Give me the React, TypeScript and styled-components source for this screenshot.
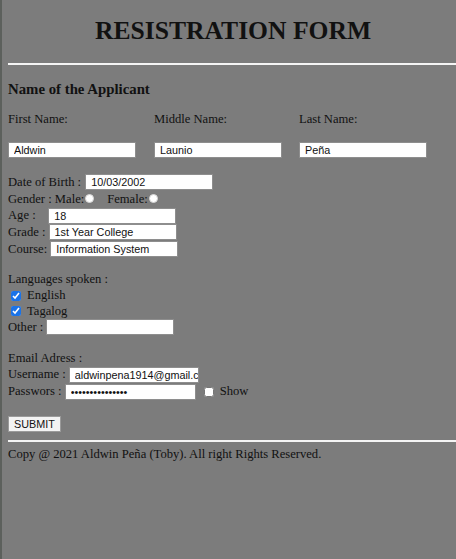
import React from 'react'
import styled, { createGlobalStyle } from 'styled-components'

const GlobalStyle = createGlobalStyle`
  html, body {
    margin: 0;
    padding: 0;
    background: #7c7c7c;
  }
  body {
    font-family: "Liberation Serif", "Times New Roman", serif;
    color: #111;
  }
`

const Page = styled.div`
  min-height: 559px;
  border-left: 2px solid #5c605c;
  padding-left: 6px;
  box-sizing: border-box;
  font-size: 12.6px;
`

const Title = styled.h1`
  margin: 0;
  height: 63px;
  display: flex;
  align-items: center;
  justify-content: center;
  padding-left: 2px;
  font-size: 25.6px;
  font-weight: bold;
  padding-bottom: 2px;
  box-sizing: border-box;
`

const Rule = styled.hr<{ $mt?: number }>`
  margin: ${(p) => p.$mt ?? 0}px 0 0;
  border: none;
  height: 2px;
  background: #f4f4f4;
`

const Heading = styled.h3`
  margin: 0;
  height: 47px;
  display: flex;
  align-items: center;
  font-size: 14.8px;
  font-weight: bold;
  padding-top: 1px;
  box-sizing: border-box;
`

const NameGrid = styled.div`
  display: grid;
  grid-template-columns: 146px 145px 1fr;
  row-gap: 16px;
`

const NameLabel = styled.div`
  height: 14px;
  line-height: 14px;
`

const Row = styled.div<{ $h?: number; $mt?: number }>`
  display: flex;
  align-items: center;
  height: ${(p) => p.$h ?? 16.7}px;
  margin-top: ${(p) => p.$mt ?? 0}px;
  white-space: pre;
`

const Field = styled.input<{ $w?: number; $ml?: number }>`
  box-sizing: border-box;
  width: ${(p) => p.$w ?? 128}px;
  height: 16px;
  margin-left: ${(p) => p.$ml ?? 0}px;
  padding: 0 0 0 5px;
  border: 1px solid #8e8e8e;
  background: #fff;
  font-family: "Liberation Sans", Arial, sans-serif;
  font-size: 10.8px;
  color: #111;
  outline: none;
`

const Radio = styled.input<{ $mr?: number }>`
  appearance: none;
  box-sizing: border-box;
  width: 9px;
  height: 9px;
  margin: 0 ${(p) => p.$mr ?? 0}px 2px 1px;
  border-radius: 50%;
  border: 1px solid #d6d6d6;
  background: #fff;
`

const Check = styled.input<{ $ml?: number }>`
  width: 10px;
  height: 10px;
  margin: 0 6px 0 ${(p) => p.$ml ?? 3}px;
  accent-color: #1a73e8;
`

const SubmitButton = styled.button`
  height: 16px;
  padding: 0 5px;
  margin-top: 16px;
  border: 1px solid #9a9a9a;
  background: #f3f3f3;
  font-family: "Liberation Sans", Arial, sans-serif;
  font-size: 10.8px;
  color: #111;
  line-height: 14px;
`

const Footer = styled.div`
  height: 26px;
  display: flex;
  align-items: center;
`

export default function App() {
  return (
    <>
      <GlobalStyle />
      <Page>
        <Title>RESISTRATION FORM</Title>
        <Rule />
        <Heading>Name of the Applicant</Heading>
        <NameGrid>
          <NameLabel>First Name:</NameLabel>
          <NameLabel>Middle Name:</NameLabel>
          <NameLabel>Last Name:</NameLabel>
          <Field readOnly value="Aldwin" />
          <Field readOnly value="Launio" />
          <Field readOnly value="Peña" />
        </NameGrid>
        <Row $mt={16}>
          Date of Birth : <Field $ml={1} readOnly value="10/03/2002" />
        </Row>
        <Row>
          Gender : Male:<Radio type="radio" name="g" $mr={13} />
          Female:<Radio type="radio" name="g" />
        </Row>
        <Row>
          Age :{'    '}<Field readOnly value="18" />
        </Row>
        <Row>
          Grade : <Field readOnly value="1st Year College" />
        </Row>
        <Row>
          Course: <Field readOnly value="Information System" />
        </Row>
        <Row $mt={14}>Languages spoken :</Row>
        <Row $h={15.5}>
          <Check type="checkbox" defaultChecked />English
        </Row>
        <Row $h={15.5}>
          <Check type="checkbox" defaultChecked />Tagalog
        </Row>
        <Row>
          Other : <Field readOnly value="" />
        </Row>
        <Row $mt={14}>Email Adress :</Row>
        <Row>
          Username : <Field readOnly value="aldwinpena1914@gmail.com" $w={130} />
        </Row>
        <Row>
          Passwors : <Field type="password" readOnly value="aldwinpena12345" $w={131} />
          <Check type="checkbox" $ml={8} />Show
        </Row>
        <SubmitButton type="button">SUBMIT</SubmitButton>
        <Rule $mt={8} />
        <Footer>Copy @ 2021 Aldwin Peña (Toby). All right Rights Reserved.</Footer>
      </Page>
    </>
  )
}
